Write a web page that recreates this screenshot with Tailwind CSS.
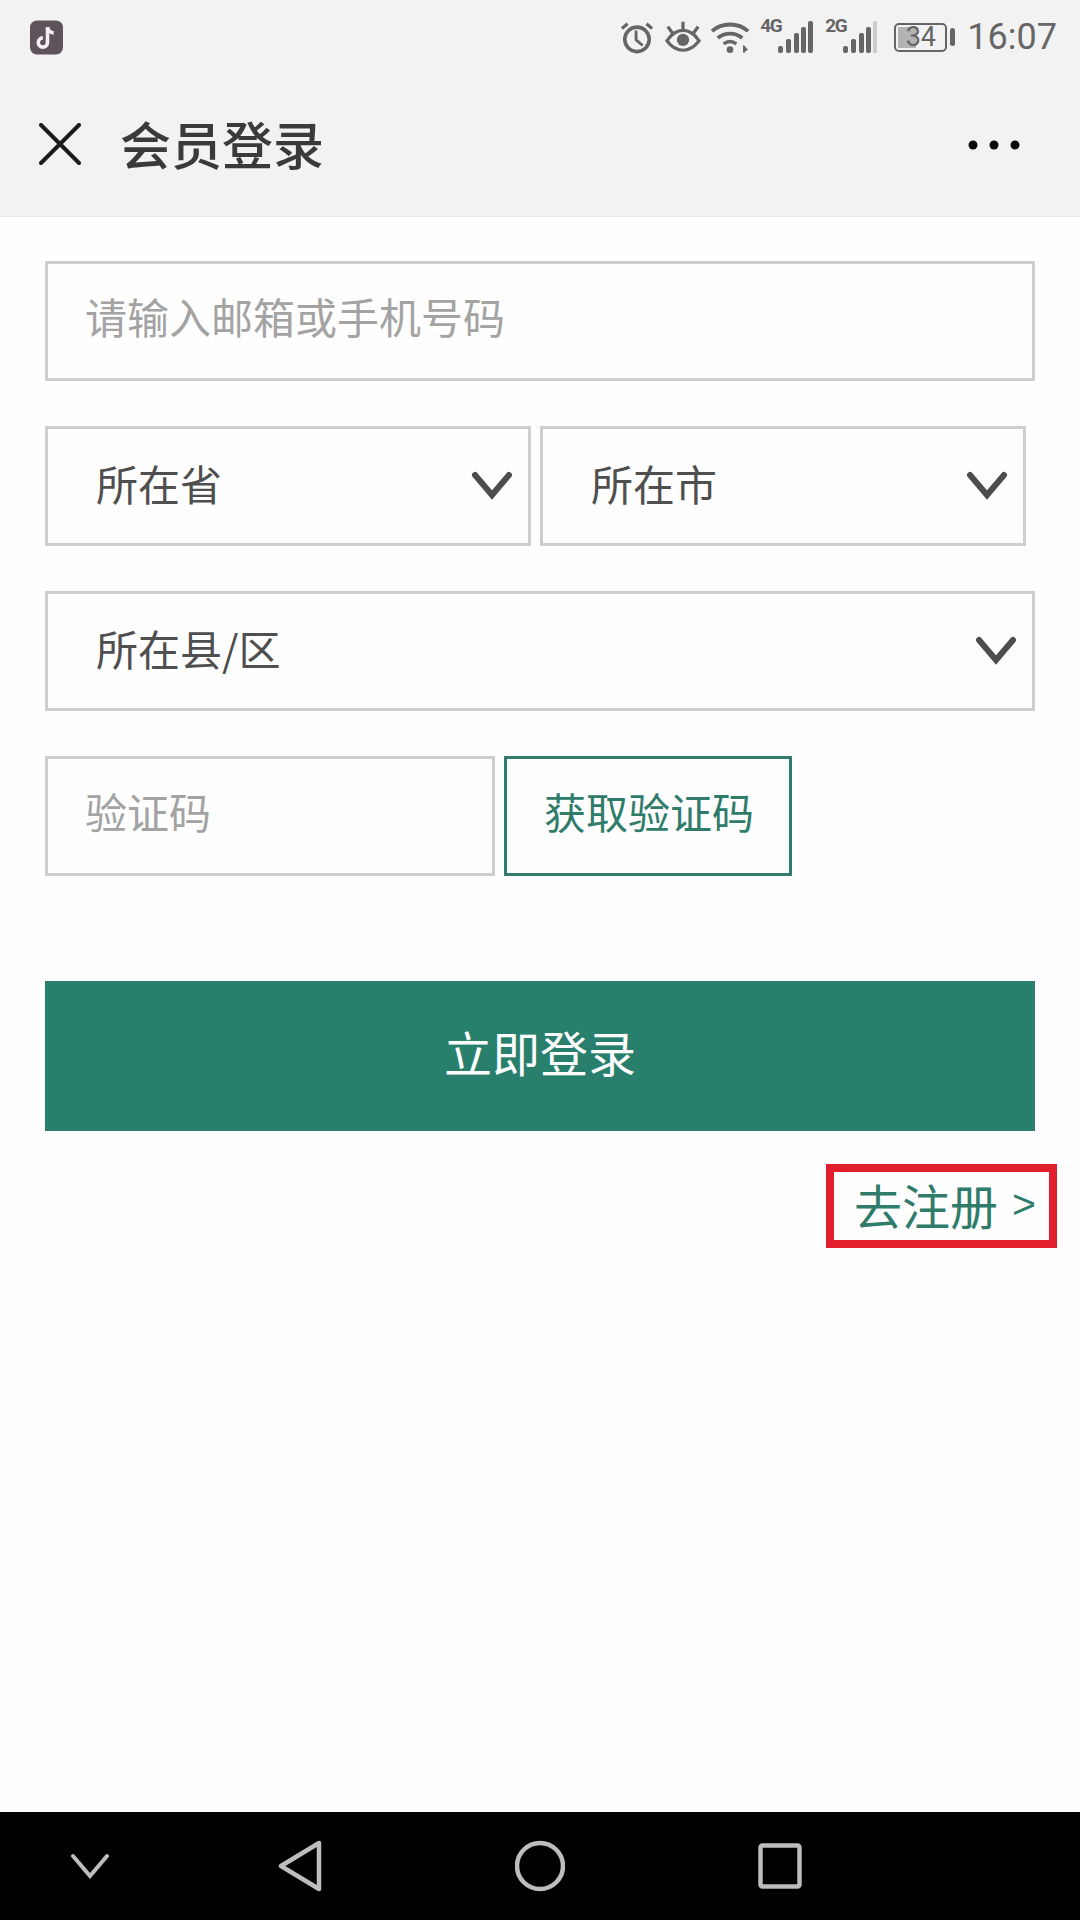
<!DOCTYPE html>
<html lang="zh"><head><meta charset="utf-8">
<script src="https://cdn.jsdelivr.net/npm/@tailwindcss/browser@4"></script>
<title>会员登录</title></head>
<body class="m-0 bg-white">
<div class="w-[1080px] h-[1920px] flex flex-col overflow-hidden bg-[#fffefe] font-['Noto_Sans_CJK_SC','Noto_Sans',sans-serif]">
  <header class="h-[217px] shrink-0 bg-[#f3f2f3] border-b border-[#ebebeb] flex flex-col">
    <div class="h-[74px] pl-[30px] pr-[23px] flex items-center justify-between">
      <svg width="33" height="35" viewBox="0 0 33 35"><rect width="33" height="34" y="0.5" rx="7" fill="#5e525b"/><path d="M17.5 7v15.500a4.600 4.600 0 1 1-4.600-4.600M17.500 7c.6 3.600 2.800 5.600 6.200 6" fill="none" stroke="#f6eef3" stroke-width="3.600"/></svg>
      <div class="flex items-center text-[#656565]">
        <svg width="32" height="34" viewBox="0 0 34 36" fill="none" stroke="#656565"><circle cx="17" cy="20.500" r="13" stroke-width="3.800"/><path d="M16 11v10l7 6" stroke-width="3"/><path d="M1 9l6-5M33 9l-6-5" stroke-width="3.400"/></svg>
        <svg class="ml-[12px]" width="36" height="34" viewBox="0 0 38 34" fill="none" stroke="#656565"><path d="M2 21C8 12 14 10 19 10s11 2 17 11C30 29 24 31 19 31S8 29 2 21Z" stroke-width="3.400"/><circle cx="19" cy="20" r="6.500" fill="#656565" stroke="none"/><path d="M19 10V1M8 13 3 6M30 13l5-7" stroke-width="3.400"/></svg>
        <svg class="ml-[10px]" width="39" height="34" viewBox="0 0 40 34" fill="none" stroke="#656565"><path d="M1 11C11 2 28 2 38 11" stroke-width="4"/><path d="M7 18c7-6 18-6 25 0" stroke-width="4"/><path d="M13 24c4-3 9-3 13 0" stroke-width="3.600"/><circle cx="19.500" cy="30" r="3.400" fill="#656565" stroke="none"/><path d="M34 26v7" stroke-width="2"/><path d="m33 25 5 5-5 3z" fill="#656565" stroke="none"/></svg>
        <div class="ml-[10px] relative w-[53px] h-[34px]">
          <span class="absolute left-0 -top-[4px] text-[19px] leading-[20px] font-bold font-['Roboto',sans-serif] tracking-[-1.500px]">4G</span>
          <svg class="absolute left-0 top-0" width="53" height="34" viewBox="0 0 53 34" fill="#656565"><rect x="18" y="26" width="5" height="7" rx="2"/><rect x="26" y="19" width="5" height="14" rx="2"/><rect x="34" y="13" width="5" height="20" rx="2"/><rect x="41" y="7" width="5" height="26" rx="2"/><rect x="48" y="1" width="5" height="32" rx="2"/></svg>
        </div>
        <div class="ml-[12px] relative w-[52px] h-[34px]">
          <span class="absolute left-0 -top-[4px] text-[19px] leading-[20px] font-bold font-['Roboto',sans-serif] tracking-[-1.500px]">2G</span>
          <svg class="absolute left-0 top-0" width="52" height="34" viewBox="0 0 52 34" fill="#656565"><rect x="18" y="26" width="5" height="7" rx="2"/><rect x="26" y="19" width="5" height="14" rx="2"/><rect x="34" y="13" width="5" height="20" rx="2"/><rect x="41" y="7" width="5" height="26" rx="2"/><rect x="48" y="1" width="4" height="32" rx="1" fill="#cdcccd"/></svg>
        </div>
        <div class="ml-[17px] relative w-[53px] h-[29px] border-2 border-[#656565] rounded-[5px] flex items-center justify-center">
          <div class="absolute left-[2px] top-[2px] bottom-[2px] w-[18px] bg-[#b4b3b4]"></div>
          <span class="relative text-[27px] leading-none font-['Roboto',sans-serif]">34</span>
        </div>
        <div class="ml-[3px] w-[5px] h-[18px] bg-[#656565] rounded-sm"></div>
        <span class="ml-[12px] text-[36px] leading-none font-['Roboto',sans-serif] text-[#666]">16:07</span>
      </div>
    </div>
    <div class="flex-1 pl-[39px] pr-[60px] flex items-center justify-between pb-[2px]">
      <div class="flex items-center">
        <svg width="42" height="42" viewBox="0 0 42 42" fill="none" stroke="#1d1b1c" stroke-width="4" stroke-linecap="round"><path d="M2 2l38 38M40 2 2 40"/></svg>
        <span class="ml-[39px] text-[51px] leading-none text-[#3a3a3a] font-medium -translate-y-[1px]">会员登录</span>
      </div>
      <svg class="translate-y-[1px]" width="52" height="10" viewBox="0 0 52 10" fill="#0b0b0b"><circle cx="5" cy="5" r="4.500"/><circle cx="26" cy="5" r="4.500"/><circle cx="47" cy="5" r="4.500"/></svg>
    </div>
  </header>

  <main class="flex-1 px-[45px] pt-[44px] flex flex-col">
    <div class="h-[120px] border-[3px] border-[#cdcdcd] pl-[37px] flex items-center text-[42px] text-[#a3a3a3] leading-none pb-[11px]">请输入邮箱或手机号码</div>

    <div class="mt-[45px] flex gap-[9px]">
      <div class="w-[486px] h-[120px] border-[3px] border-[#cdcdcd] pl-[48px] pr-[15px] flex items-center justify-between text-[42px] text-[#4f4f4f] leading-none">
        <span class="pb-[6px]">所在省</span>
        <svg width="42" height="30" viewBox="0 0 42 30" fill="none" stroke="#4d4d4d" stroke-width="6" stroke-linecap="round"><path d="M4 4l17 20L38 4"/></svg>
      </div>
      <div class="w-[486px] h-[120px] border-[3px] border-[#cdcdcd] pl-[48px] pr-[15px] flex items-center justify-between text-[42px] text-[#4f4f4f] leading-none">
        <span class="pb-[6px]">所在市</span>
        <svg width="42" height="30" viewBox="0 0 42 30" fill="none" stroke="#4d4d4d" stroke-width="6" stroke-linecap="round"><path d="M4 4l17 20L38 4"/></svg>
      </div>
    </div>

    <div class="mt-[45px] h-[120px] border-[3px] border-[#cdcdcd] pl-[48px] pr-[15px] flex items-center justify-between text-[42px] text-[#4f4f4f] leading-none">
      <span class="pb-[6px]">所在县/区</span>
      <svg width="42" height="30" viewBox="0 0 42 30" fill="none" stroke="#4d4d4d" stroke-width="6" stroke-linecap="round"><path d="M4 4l17 20L38 4"/></svg>
    </div>

    <div class="mt-[45px] flex gap-[9px]">
      <div class="w-[450px] h-[120px] border-[3px] border-[#cdcdcd] pl-[37px] flex items-center text-[42px] text-[#a3a3a3] leading-none pb-[11px]">验证码</div>
      <div class="w-[288px] h-[120px] border-[3px] border-[#2f7c6b] flex items-center justify-center text-[42px] text-[#2f7c6b] leading-none pb-[11px] pl-[2px]">获取验证码</div>
    </div>

    <div class="mt-[105px] h-[150px] bg-[#287f6b] flex items-center justify-center text-[48px] text-[#fdfdfd] leading-none pb-[11px]">立即登录</div>

    <div class="mt-[33px] -mr-[22px] self-end w-[231px] h-[84px] border-[8px] border-[#e11f2d] pl-[20px] pb-[4px] flex items-center text-[48px] text-[#2f7c6b] leading-none whitespace-nowrap">去注册<span class="ml-[14px] text-[41px] font-['Liberation_Sans',sans-serif]">&gt;</span></div>
  </main>

  <nav class="h-[108px] shrink-0 bg-black flex items-center pl-[70px]">
    <svg width="40" height="26" viewBox="0 0 40 26" fill="none" stroke="#bdbdbd" stroke-width="4" stroke-linecap="round"><path d="M3 3l17 20L37 3"/></svg>
    <svg class="ml-[168px]" width="44" height="52" viewBox="0 0 44 52" fill="none" stroke="#bdbdbd" stroke-width="4.500" stroke-linejoin="round"><path d="M41 3v46L3 26Z"/></svg>
    <svg class="ml-[193px]" width="50" height="52" viewBox="0 0 50 52" fill="none" stroke="#bdbdbd" stroke-width="4.500"><circle cx="25" cy="26" r="23"/></svg>
    <svg class="ml-[193px]" width="44" height="46" viewBox="0 0 44 46" fill="none" stroke="#bdbdbd" stroke-width="4.500"><rect x="2.500" y="2.500" width="39" height="41" rx="2"/></svg>
  </nav>
</div>
</body></html>
